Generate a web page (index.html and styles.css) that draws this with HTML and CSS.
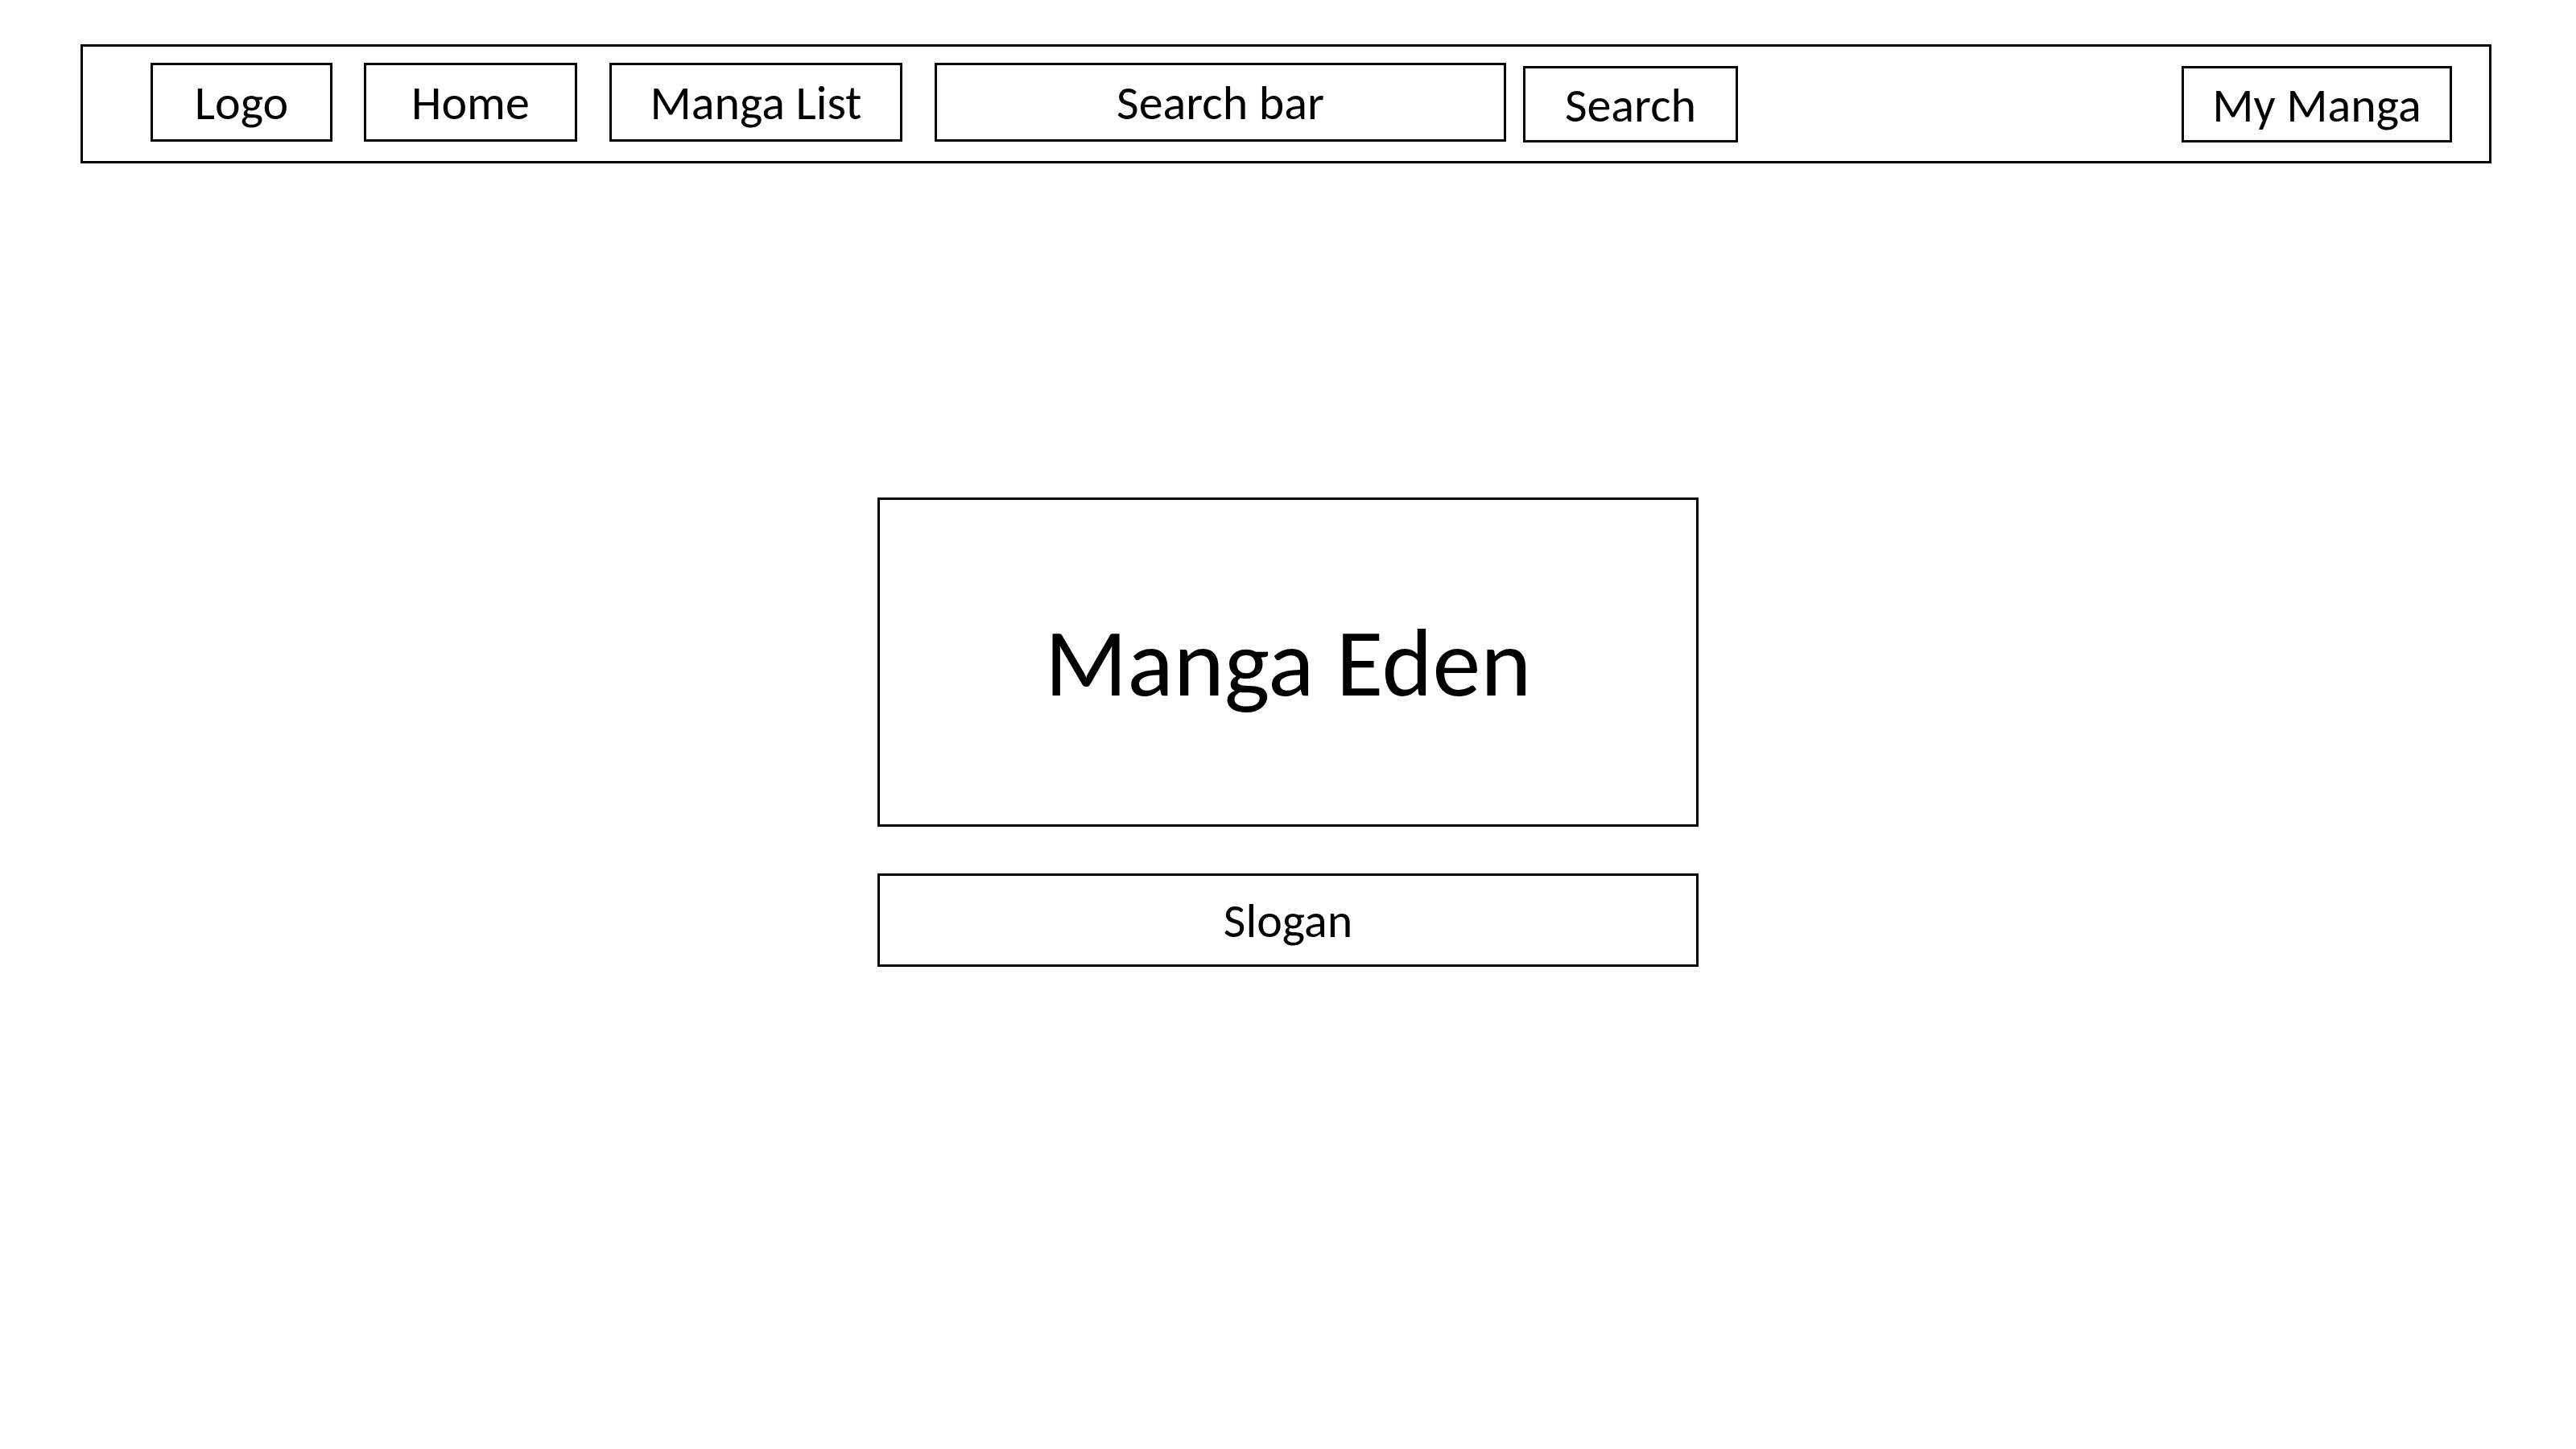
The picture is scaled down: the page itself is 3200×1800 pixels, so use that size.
FILE: index.html
```html
<!DOCTYPE html>
<html lang="en">
<head>
<meta charset="utf-8">
<title>Manga Eden wireframe</title>
<link rel="stylesheet" href="styles.css">
</head>
<body>
<header class="nav">
  <div class="box nav-item logo">Logo</div>
  <div class="box nav-item home">Home</div>
  <div class="box nav-item list">Manga List</div>
  <div class="box nav-item searchbar">Search bar</div>
  <div class="box nav-item btn search">Search</div>
  <div class="spacer"></div>
  <div class="box nav-item btn mymanga">My Manga</div>
</header>
<main class="hero">
  <div class="box title">Manga Eden</div>
  <div class="box slogan">Slogan</div>
</main>
</body>
</html>
```
FILE: styles.css
```css
html, body {
  margin: 0;
  padding: 0;
  background: #ffffff;
}
body {
  width: 3200px;
  height: 1800px;
  font-family: Carlito, "Open Sans", sans-serif;
  color: #000000;
}
.box {
  box-sizing: border-box;
  border: 3px solid #000000;
  display: flex;
  align-items: center;
  justify-content: center;
  white-space: nowrap;
}
.nav {
  box-sizing: border-box;
  margin: 55px 0 0 100px;
  width: 2995px;
  height: 148px;
  border: 3px solid #000000;
  display: flex;
  align-items: flex-start;
  padding: 20px 46px 0 84px;
}
.nav-item {
  height: 98px;
  font-size: 60px;
  margin-right: 40px;
  padding-top: 0;
}
.logo { width: 226px; margin-right: 39px; }
.home { width: 265px; }
.list { width: 364px; }
.searchbar { width: 710px; margin-right: 21px; }
.btn {
  margin-top: 4px;
  height: 95px;
  padding-top: 2px;
}
.search { width: 267px; margin-right: 0; }
.mymanga { width: 336px; margin-right: 0; }
.spacer { flex: 1; }
.hero {
  display: flex;
  flex-direction: column;
  align-items: center;
  margin-top: 415px;
}
.title {
  width: 1020px;
  height: 409px;
  font-size: 120px;
  padding-top: 0;
}
.slogan {
  width: 1020px;
  height: 116px;
  margin-top: 58px;
  font-size: 60px;
  padding-top: 0;
}
```
